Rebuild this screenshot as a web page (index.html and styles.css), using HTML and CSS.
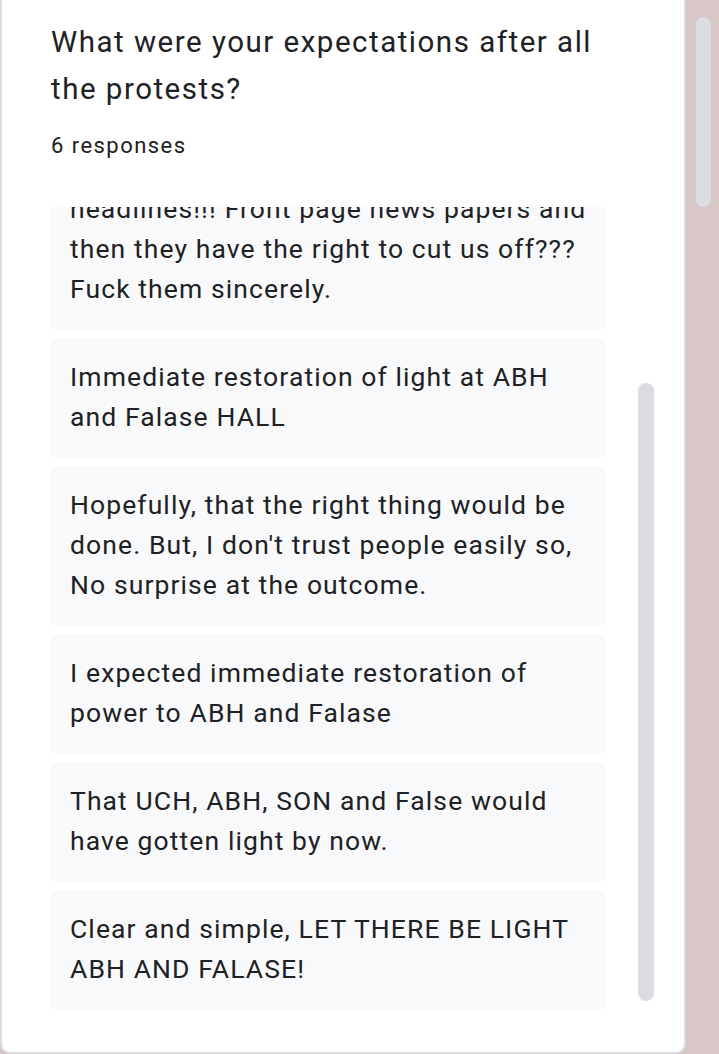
FILE: index.html
```html
<!DOCTYPE html>
<html lang="en">
<head>
<meta charset="utf-8">
<title>Responses</title>
<link rel="stylesheet" href="styles.css">
</head>
<body>
<div class="page">
  <main class="panel">
    <h1 class="title">What were your expectations after all the protests?</h1>
    <p class="count">6 responses</p>
    <div class="list-row">
      <div class="list">
        <div class="card card-long">We made noise everywhere, we trended<br>for days on social media, we made the<br>headlines!!! Front page news papers and<br>then they have the right to cut us off???<br>Fuck them sincerely.</div>
        <div class="card">Immediate restoration of light at ABH and Falase HALL</div>
        <div class="card">Hopefully, that the right thing would be done. But, I don't trust people easily so, No surprise at the outcome.</div>
        <div class="card">I expected immediate restoration of power to ABH and Falase</div>
        <div class="card">That UCH, ABH, SON and False would have gotten light by now.</div>
        <div class="card">Clear and simple, LET THERE BE LIGHT ABH AND FALASE!</div>
      </div>
      <div class="track"><div class="thumb"></div></div>
    </div>
  </main>
  <aside class="outer-track"><div class="outer-thumb"></div></aside>
</div>
</body>
</html>
```

FILE: styles.css
```css
html, body {
  margin: 0;
  padding: 0;
}
body {
  background: #d8c5c6;
  font-family: Roboto, "Noto Sans", "Liberation Sans", sans-serif;
  color: #202124;
}
.page {
  display: flex;
  width: 719px;
  height: 1054px;
  overflow: hidden;
}
.panel {
  box-sizing: border-box;
  width: 686px;
  height: 1054px;
  background: #ffffff;
  border-left: 2px solid #dadce0;
  border-right: 2px solid #dadce0;
  border-bottom: 2px solid #dadce0;
  border-radius: 0 0 10px 10px;
  padding: 19px 30px 0 48px;
  display: flex;
  flex-direction: column;
}
.title {
  margin: 0 0 0 1px;
  font-size: 29.5px;
  line-height: 47px;
  font-weight: 400;
  letter-spacing: 1.5px;
  max-width: 556px;
}
.count {
  margin: 18px 0 0 1px;
  font-size: 22px;
  line-height: 30px;
  letter-spacing: 1.45px;
}
.list-row {
  margin-top: 46px;
  display: flex;
  gap: 32px;
  height: 805px;
}
.list {
  width: 556px;
  height: 805px;
  overflow: hidden;
  display: flex;
  flex-direction: column;
  justify-content: flex-end;
  gap: 8px;
  padding-bottom: 2px;
  box-sizing: border-box;
}
.card {
  flex: none;
  background: #f8f9fa;
  border-radius: 8px;
  padding: 19px 20px 21px;
  font-size: 26.5px;
  line-height: 40px;
  letter-spacing: 1.1px;
}
.card-long {
  white-space: nowrap;
  overflow: hidden;
}
.track {
  width: 16px;
  display: flex;
  flex-direction: column;
  justify-content: flex-end;
  padding-bottom: 11px;
  box-sizing: border-box;
}
.thumb {
  height: 618px;
  background: #dadce0;
  border-radius: 8px;
}
.outer-track {
  flex: 1;
  padding: 17px 8px 0 10px;
}
.outer-thumb {
  width: 15px;
  height: 190px;
  background: #dadde1;
  border-radius: 8px;
}
```
